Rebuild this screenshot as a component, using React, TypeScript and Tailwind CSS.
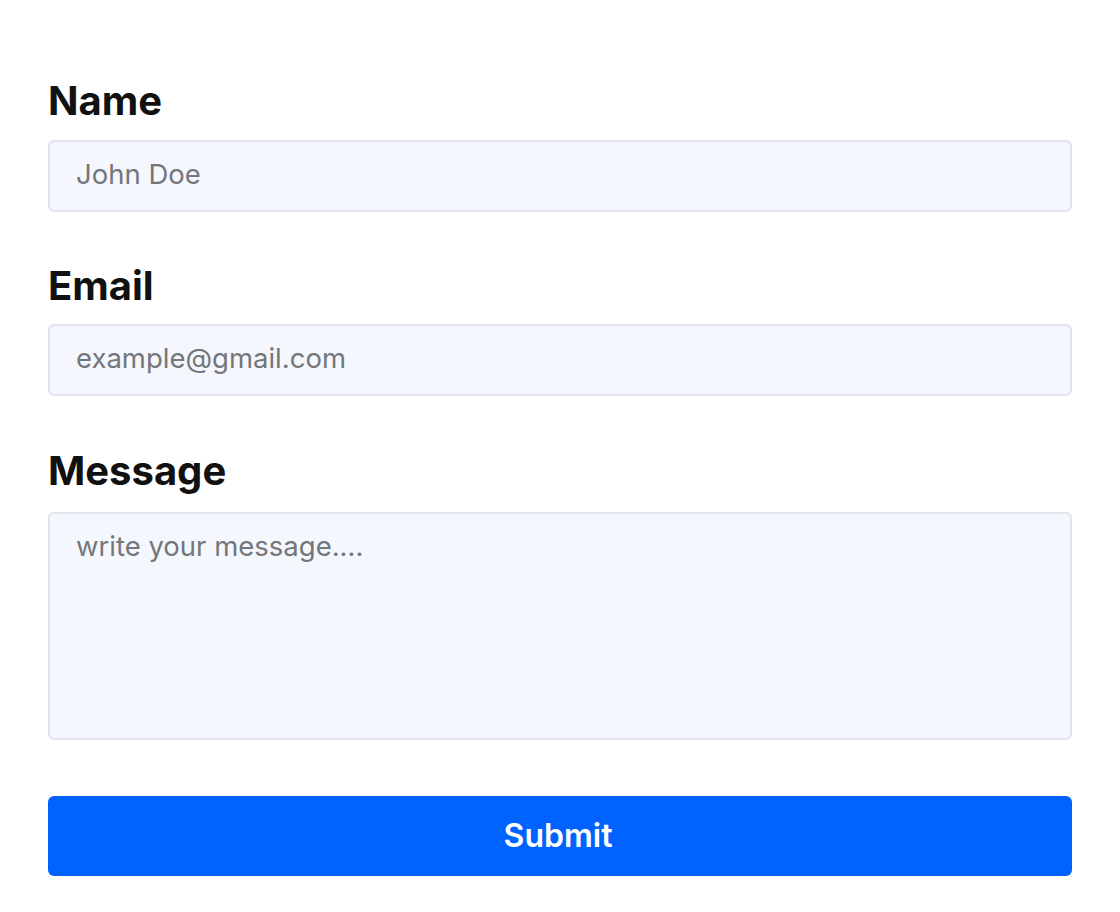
import { useState } from "react";

const fieldClass =
  "w-full rounded-[6px] border-2 border-[#e2e4ea] bg-[#f4f7fe] px-[26px] text-[27.5px] text-[#111] placeholder:text-[#75767a] outline-none";

const labelClass = "block text-[40px] font-bold leading-[50px] text-[#111]";

export default function App() {
  const [form, setForm] = useState({ name: "", email: "", message: "" });

  return (
    <div className="min-h-[912px] bg-white px-12 pt-[76px] font-['Inter',sans-serif]">
      <form
        className="flex flex-col"
        onSubmit={(e) => {
          e.preventDefault();
        }}
      >
        {/* name */}
        <label className={labelClass}>Name</label>
        <input
          type="text"
          value={form.name}
          onChange={(e) => setForm({ ...form, name: e.target.value })}
          placeholder="John Doe"
          className={`${fieldClass} mt-[14px] h-[72px] pb-[4px]`}
        />

        {/* email */}
        <label className={`${labelClass} mt-[49px]`}>Email</label>
        <input
          type="email"
          value={form.email}
          onChange={(e) => setForm({ ...form, email: e.target.value })}
          placeholder="example@gmail.com"
          className={`${fieldClass} mt-[13px] h-[72px] pb-[4px]`}
        />

        {/* message */}
        <label className={`${labelClass} mt-[50px]`}>Message</label>
        <textarea
          value={form.message}
          onChange={(e) => setForm({ ...form, message: e.target.value })}
          placeholder="write your message...."
          className={`${fieldClass} mt-[16px] h-[228px] resize-none pt-[14px] leading-[36px]`}
        />

        <button
          type="submit"
          className="mt-[56px] h-[80px] w-full rounded-[6px] bg-[#0062ff] pr-[4px] text-[32px] font-semibold text-white"
        >
          Submit
        </button>
      </form>
    </div>
  );
}
